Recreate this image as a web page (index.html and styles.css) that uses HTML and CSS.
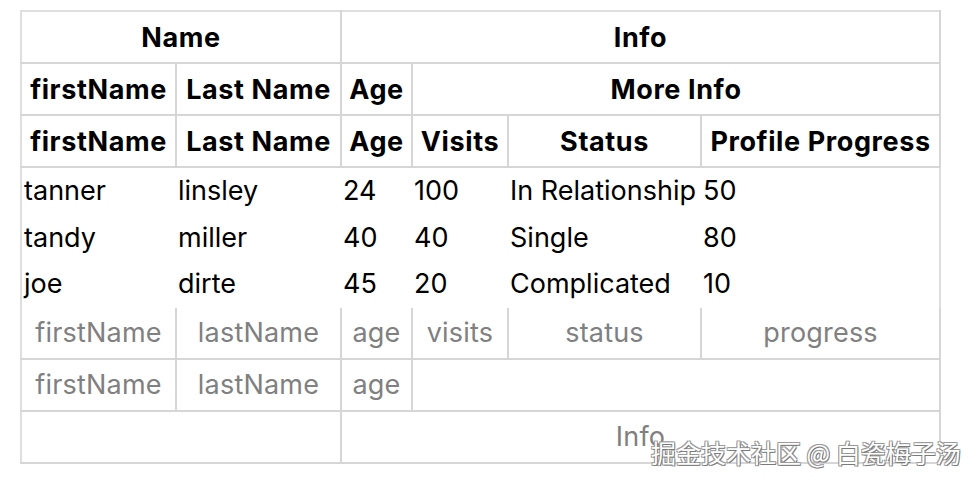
FILE: index.html
```html
<!DOCTYPE html>
<html>
<head>
<meta charset="utf-8">
<link rel="stylesheet" href="styles.css">
</head>
<body>
<div class="page">
<table class="grid">
  <colgroup>
    <col class="c-first"><col class="c-last"><col class="c-age"><col class="c-visits"><col class="c-status"><col class="c-progress">
  </colgroup>
  <thead>
    <tr class="hrow"><th colspan="2">Name</th><th colspan="4">Info</th></tr>
    <tr class="hrow"><th>firstName</th><th>Last Name</th><th>Age</th><th colspan="3">More Info</th></tr>
    <tr class="hrow"><th>firstName</th><th>Last Name</th><th>Age</th><th>Visits</th><th>Status</th><th>Profile Progress</th></tr>
  </thead>
  <tbody>
    <tr class="brow"><td>tanner</td><td>linsley</td><td>24</td><td>100</td><td>In Relationship</td><td>50</td></tr>
    <tr class="brow"><td>tandy</td><td>miller</td><td>40</td><td>40</td><td>Single</td><td>80</td></tr>
    <tr class="brow"><td>joe</td><td>dirte</td><td>45</td><td>20</td><td>Complicated</td><td>10</td></tr>
  </tbody>
  <tfoot>
    <tr class="hrow"><th>firstName</th><th>lastName</th><th>age</th><th>visits</th><th>status</th><th>progress</th></tr>
    <tr class="hrow"><th>firstName</th><th>lastName</th><th>age</th><th colspan="3"></th></tr>
    <tr class="hrow"><th colspan="2"></th><th colspan="4">Info</th></tr>
  </tfoot>
</table>
<div class="watermark">掘金技术社区 @ 白瓷梅子汤</div>
</div>
</body>
</html>
```
FILE: styles.css
```css
html, body {
  margin: 0;
  padding: 0;
  background: #ffffff;
}
body {
  font-family: Inter, "Noto Sans", sans-serif;
  font-size: 27px;
  color: #000;
}
.page {
  position: relative;
  width: 978px;
  height: 482px;
  overflow: hidden;
  padding: 10px 0 0 20px;
  box-sizing: border-box;
}
.grid {
  border-collapse: collapse;
  table-layout: fixed;
  width: 919px;
  border: 2px solid #dedede;
}
.c-first { width: 155px; }
.c-last { width: 165px; }
.c-age { width: 71px; }
.c-visits { width: 96px; }
.c-status { width: 193px; }
.c-progress { width: 239px; }
.grid th {
  border-bottom: 2px solid #d6d6d6;
  border-right: 2px solid #d6d6d6;
  padding: 0 6px;
  height: 50px;
  font-weight: 700;
  text-align: center;
  white-space: nowrap;
  letter-spacing: 0.6px;
}
.grid tbody td {
  padding: 0 2px;
  height: 46.5px;
  line-height: 32px;
  white-space: nowrap;
  letter-spacing: 0;
}
.grid tfoot {
  color: #808080;
}
.grid tfoot th {
  font-weight: 400;
  letter-spacing: 0.2px;
}
.watermark {
  position: absolute;
  left: 651px;
  top: 436px;
  font-family: "Noto Sans CJK SC", "Noto Sans", sans-serif;
  font-size: 25px;
  line-height: 32px;
  color: #ffffff;
  white-space: nowrap;
  text-shadow: 1px 1px 0 #7a7a7a, -1px -1px 0 #9a9a9a, 1px -1px 0 #9a9a9a, -1px 1px 0 #9a9a9a;
}
```
